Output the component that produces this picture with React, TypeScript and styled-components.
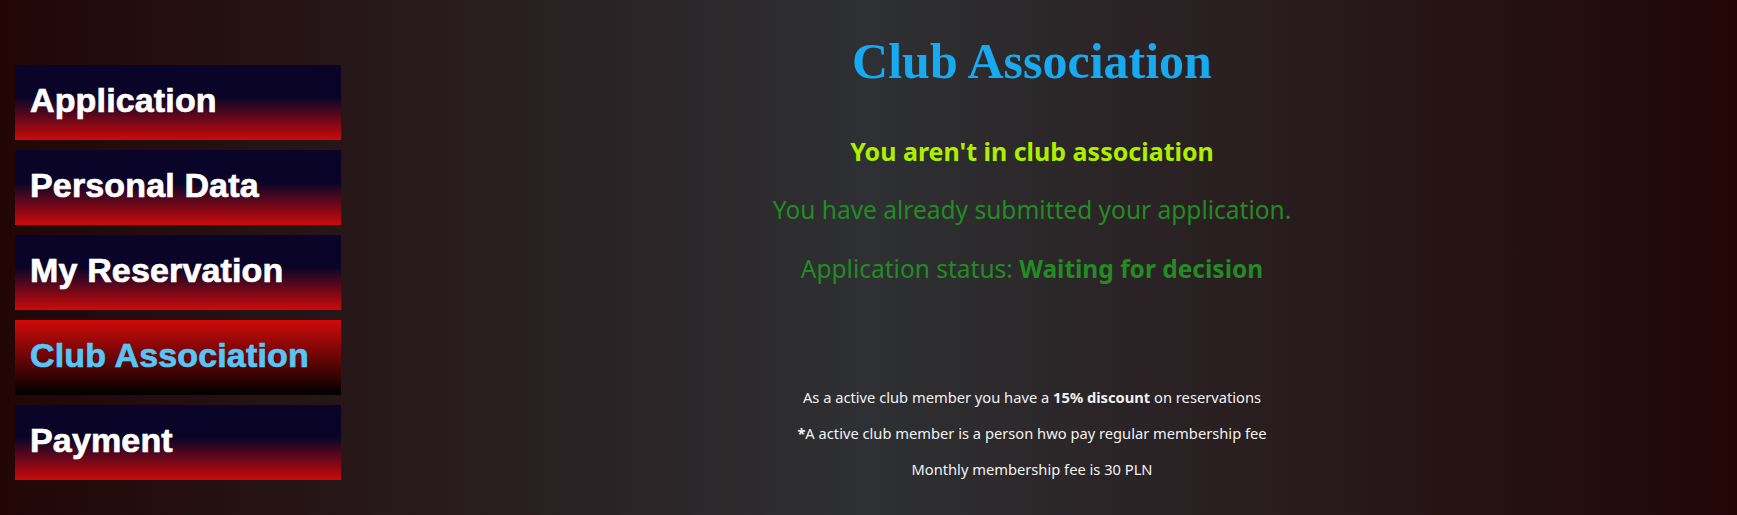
import React from "react";
import styled, { createGlobalStyle } from "styled-components";

const GlobalStyle = createGlobalStyle`
  html, body {
    margin: 0;
    padding: 0;
    height: 100%;
  }
  body {
    background: linear-gradient(to right, #220606 0%, #2e3033 50%, #220606 100%);
    font-family: "Noto Sans", "Liberation Sans", sans-serif;
  }
  #root {
    min-height: 100%;
  }
`;

const Page = styled.div`
  display: flex;
  min-height: 515px;
  box-sizing: border-box;
`;

const Sidebar = styled.nav`
  display: flex;
  flex-direction: column;
  gap: 10px;
  padding: 65px 0 0 15px;
  width: 326px;
  flex-shrink: 0;
`;

const NavButton = styled.div<{ $active?: boolean }>`
  box-sizing: border-box;
  height: 75px;
  padding: 16px 15px 0;
  font-family: "Liberation Sans", Arial, sans-serif;
  font-weight: 700;
  font-size: 34px;
  line-height: 38px;
  letter-spacing: 0.15px;
  white-space: nowrap;
  cursor: pointer;
  -webkit-text-stroke: 0.7px currentColor;
  color: ${(p) => (p.$active ? "#55c6f7" : "#ffffff")};
  background: ${(p) =>
    p.$active
      ? "linear-gradient(to bottom, #cc0a0a 3%, #000000 100%)"
      : "linear-gradient(to bottom, #0a0528 44%, #cc0a0a 100%)"};
`;

const Main = styled.main`
  flex: 1;
  display: flex;
  flex-direction: column;
  align-items: center;
  padding: 31px 14px 0 0;
  text-align: center;
`;

const Title = styled.h1`
  margin: 0;
  font-family: "Liberation Serif", "Times New Roman", serif;
  font-weight: 700;
  font-size: 50px;
  line-height: 60px;
  color: #18aaf0;
`;

const Notice = styled.h3`
  margin: 45px 0 0;
  font-weight: 700;
  font-size: 25px;
  line-height: 30px;
  color: #aeee00;
`;

const Info = styled.p`
  margin: 29px 0 0;
  font-weight: 400;
  font-size: 24.5px;
  line-height: 30px;
  color: #228b22;
`;

const Strong = styled.b`
  font-weight: 700;
`;

const Footer = styled.div`
  margin-top: 103px;
  display: flex;
  flex-direction: column;
  align-items: center;
  gap: 16px;
`;

const FootLine = styled.p`
  margin: 0;
  font-size: 14.7px;
  line-height: 20px;
  color: #f2f2f2;
`;

const items = [
  "Application",
  "Personal Data",
  "My Reservation",
  "Club Association",
  "Payment",
];

export default function App() {
  return (
    <>
      <GlobalStyle />
      <Page>
        <Sidebar>
          {items.map((item) => (
            <NavButton key={item} $active={item === "Club Association"}>
              {item}
            </NavButton>
          ))}
        </Sidebar>
        <Main>
          <Title>Club Association</Title>
          <Notice>You aren't in club association</Notice>
          <Info>You have already submitted your application.</Info>
          <Info>
            Application status: <Strong>Waiting for decision</Strong>
          </Info>
          <Footer>
            <FootLine>
              As a active club member you have a <Strong>15% discount</Strong> on
              reservations
            </FootLine>
            <FootLine>
              <Strong>*</Strong>A active club member is a person hwo pay regular
              membership fee
            </FootLine>
            <FootLine>Monthly membership fee is 30 PLN</FootLine>
          </Footer>
        </Main>
      </Page>
    </>
  );
}
